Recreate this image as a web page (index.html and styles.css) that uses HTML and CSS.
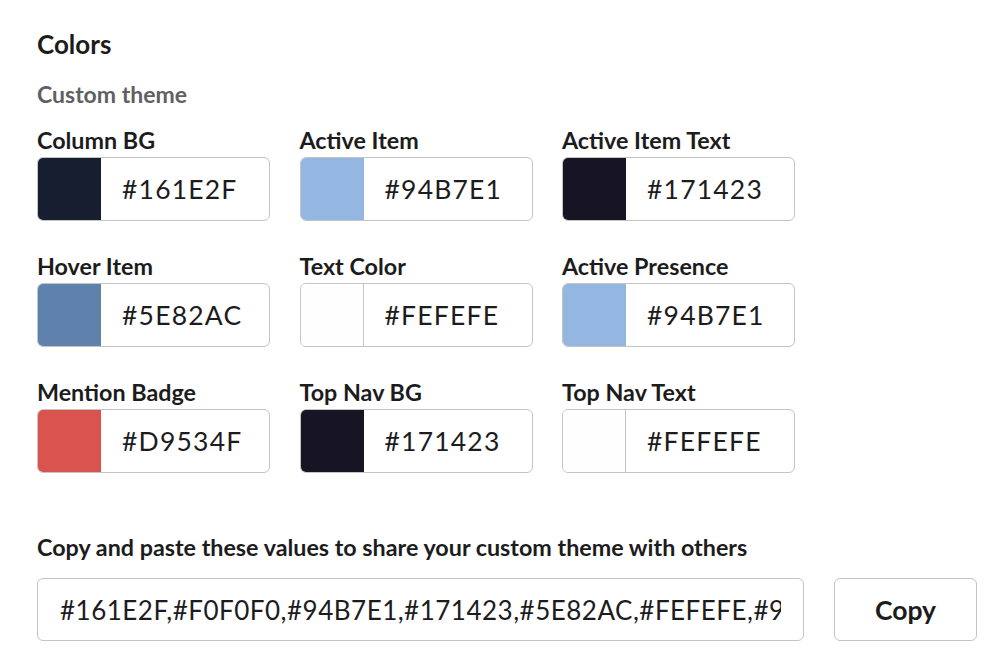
FILE: index.html
```html
<!DOCTYPE html>
<html>
<head>
<meta charset="utf-8">
<link rel="stylesheet" href="styles.css">
</head>
<body>
<div class="page">
  <h2 class="title">Colors</h2>
  <h3 class="subtitle">Custom theme</h3>
  <div class="grid">
    <div class="field"><div class="label">Column BG</div><div class="box"><span class="swatch" style="background:#161E2F"></span><span class="hex">#161E2F</span></div></div>
    <div class="field"><div class="label">Active Item</div><div class="box"><span class="swatch" style="background:#94B7E1"></span><span class="hex">#94B7E1</span></div></div>
    <div class="field"><div class="label">Active Item Text</div><div class="box"><span class="swatch" style="background:#171423"></span><span class="hex">#171423</span></div></div>
    <div class="field"><div class="label">Hover Item</div><div class="box"><span class="swatch" style="background:#5E82AC"></span><span class="hex">#5E82AC</span></div></div>
    <div class="field"><div class="label">Text Color</div><div class="box"><span class="swatch light" style="background:#FEFEFE"></span><span class="hex">#FEFEFE</span></div></div>
    <div class="field"><div class="label">Active Presence</div><div class="box"><span class="swatch" style="background:#94B7E1"></span><span class="hex">#94B7E1</span></div></div>
    <div class="field"><div class="label">Mention Badge</div><div class="box"><span class="swatch" style="background:#D9534F"></span><span class="hex">#D9534F</span></div></div>
    <div class="field"><div class="label">Top Nav BG</div><div class="box"><span class="swatch" style="background:#171423"></span><span class="hex">#171423</span></div></div>
    <div class="field"><div class="label">Top Nav Text</div><div class="box"><span class="swatch light" style="background:#FEFEFE"></span><span class="hex">#FEFEFE</span></div></div>
  </div>
  <div class="share-label">Copy and paste these values to share your custom theme with others</div>
  <div class="share-row">
    <input class="share-input" type="text" readonly value="#161E2F,#F0F0F0,#94B7E1,#171423,#5E82AC,#FEFEFE,#94B7E1,#D9534F,#171423,#FEFEFE">
    <button class="copy-btn" type="button">Copy</button>
  </div>
</div>
</body>
</html>
```

FILE: styles.css
```css
* { box-sizing: border-box; }
html, body {
  margin: 0;
  padding: 0;
  background: #ffffff;
}
body {
  font-family: Lato, "Open Sans", "Liberation Sans", sans-serif;
  color: #1d1c1d;
}
.page {
  padding: 29px 0 0 37px;
}
.title {
  margin: 0;
  font-size: 26px;
  line-height: 30px;
  font-weight: 700;
}
.subtitle {
  margin: 22px 0 0 0;
  font-size: 23px;
  line-height: 26px;
  font-weight: 700;
  color: #616061;
}
.grid {
  margin-top: 20px;
  display: grid;
  grid-template-columns: 233px 233px 233px;
  column-gap: 29.5px;
  row-gap: 32px;
}
.label {
  font-size: 23.3px;
  line-height: 26px;
  font-weight: 700;
  margin-bottom: 4px;
  white-space: nowrap;
}
.box {
  height: 64px;
  border: 1px solid #c4c4c4;
  border-radius: 6px;
  display: flex;
  align-items: center;
  overflow: hidden;
}
.swatch {
  width: 64px;
  height: 64px;
  margin: -1px 0 -1px -1px;
  flex: none;
}
.swatch.light {
  margin-left: 0;
  width: 63px;
  border-right: 1px solid #c4c4c4;
}
.hex {
  padding-left: 21px;
  font-size: 26.5px;
  line-height: 30px;
  letter-spacing: 1.2px;
}
.share-label {
  margin-top: 62px;
  font-size: 23.3px;
  line-height: 24px;
  font-weight: 700;
  white-space: nowrap;
}
.share-row {
  margin-top: 19px;
  display: flex;
  gap: 30px;
}
.share-input {
  width: 767px;
  height: 63px;
  border: 1px solid #c4c4c4;
  border-radius: 6px;
  padding: 0 22px;
  font-family: Lato, "Open Sans", "Liberation Sans", sans-serif;
  font-size: 26px;
  letter-spacing: 0.5px;
  color: #1d1c1d;
  background: #fff;
  outline: none;
}
.copy-btn {
  width: 143px;
  height: 63px;
  border: 1px solid #c4c4c4;
  border-radius: 6px;
  background: #fff;
  font-family: Lato, "Open Sans", "Liberation Sans", sans-serif;
  font-size: 26.5px;
  font-weight: 700;
  color: #1d1c1d;
  padding: 0;
}
```
